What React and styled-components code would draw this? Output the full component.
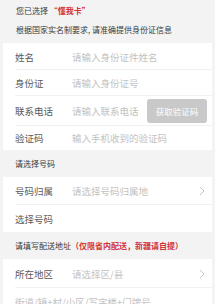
import React from 'react';
import styled, { createGlobalStyle } from 'styled-components';

const GlobalStyle = createGlobalStyle`
  html, body {
    margin: 0;
    padding: 0;
    background: #f3f3f3;
  }
  body {
    font-family: "Noto Sans CJK SC", "Noto Sans", sans-serif;
  }
`;

const Page = styled.div`
  width: 215px;
  height: 304px;
  overflow: hidden;
  background: #f3f3f3;
`;

const Intro = styled.div`
  padding: 4px 16px 6px 16px;
  display: flex;
  flex-direction: column;
  gap: 5px;
`;

const Note = styled.div`
  font-size: 8px;
  line-height: 14px;
  color: #3a3a3a;
  white-space: nowrap;
`;

const Red = styled.span`
  color: #d2343a;
  font-weight: bold;
`;

const Panel = styled.div`
  background: #fff;
  margin: 0 3px;
`;

const Row = styled.div`
  display: flex;
  align-items: center;
  height: ${p => p.h || 26}px;
  margin-left: 12px;
  padding-right: 5px;
  border-top: 1px solid ${p => (p.first ? 'transparent' : '#f1f1f1')};
  box-sizing: border-box;
`;

const Label = styled.div`
  width: 57px;
  flex-shrink: 0;
  font-size: 9.5px;
  color: #5a5a5a;
`;

const Placeholder = styled.div`
  flex: 1;
  font-size: 9.5px;
  color: #c2c2c2;
  white-space: nowrap;
`;

const CodeButton = styled.div`
  width: 60px;
  height: 24px;
  border-radius: 3px;
  background: #c9c9c9;
  color: #fff;
  font-size: 8.5px;
  display: flex;
  align-items: center;
  justify-content: center;
`;

const SectionTitle = styled.div`
  height: 27px;
  display: flex;
  align-items: center;
  padding-left: 15px;
  font-size: 8px;
  color: #3a3a3a;
  white-space: nowrap;
`;

const Chevron = () => (
  <svg width="6" height="10" viewBox="0 0 6 10" style={{ marginRight: 2 }}>
    <path d="M1 1 L5 5 L1 9" fill="none" stroke="#c4c4c4" strokeWidth="1" />
  </svg>
);

const App = () => (
  <Page>
    <GlobalStyle />
    <Intro>
      <Note>您已选择 <Red>“懂我卡”</Red></Note>
      <Note>根据国家实名制要求, 请准确提供身份证信息</Note>
    </Intro>
    <Panel>
      <Row first h={26}><Label>姓名</Label><Placeholder>请输入身份证件姓名</Placeholder></Row>
      <Row h={26}><Label>身份证</Label><Placeholder>请输入身份证号</Placeholder></Row>
      <Row h={30}>
        <Label>联系电话</Label>
        <Placeholder>请输入联系电话</Placeholder>
        <CodeButton>获取验证码</CodeButton>
      </Row>
      <Row h={25}><Label>验证码</Label><Placeholder>输入手机收到的验证码</Placeholder></Row>
    </Panel>
    <SectionTitle>请选择号码</SectionTitle>
    <Panel>
      <Row first h={27}><Label>号码归属</Label><Placeholder>请选择号码归属地</Placeholder><Chevron /></Row>
      <Row h={28}><Label>选择号码</Label></Row>
    </Panel>
    <SectionTitle>请填写配送地址<Red>（仅限省内配送，新疆请自提）</Red></SectionTitle>
    <Panel>
      <Row first h={28}><Label>所在地区</Label><Placeholder>请选择区/县</Placeholder><Chevron /></Row>
      <Row h={28}><Placeholder>街道/镇+村/小区/写字楼+门牌号</Placeholder></Row>
    </Panel>
  </Page>
);

export default App;
